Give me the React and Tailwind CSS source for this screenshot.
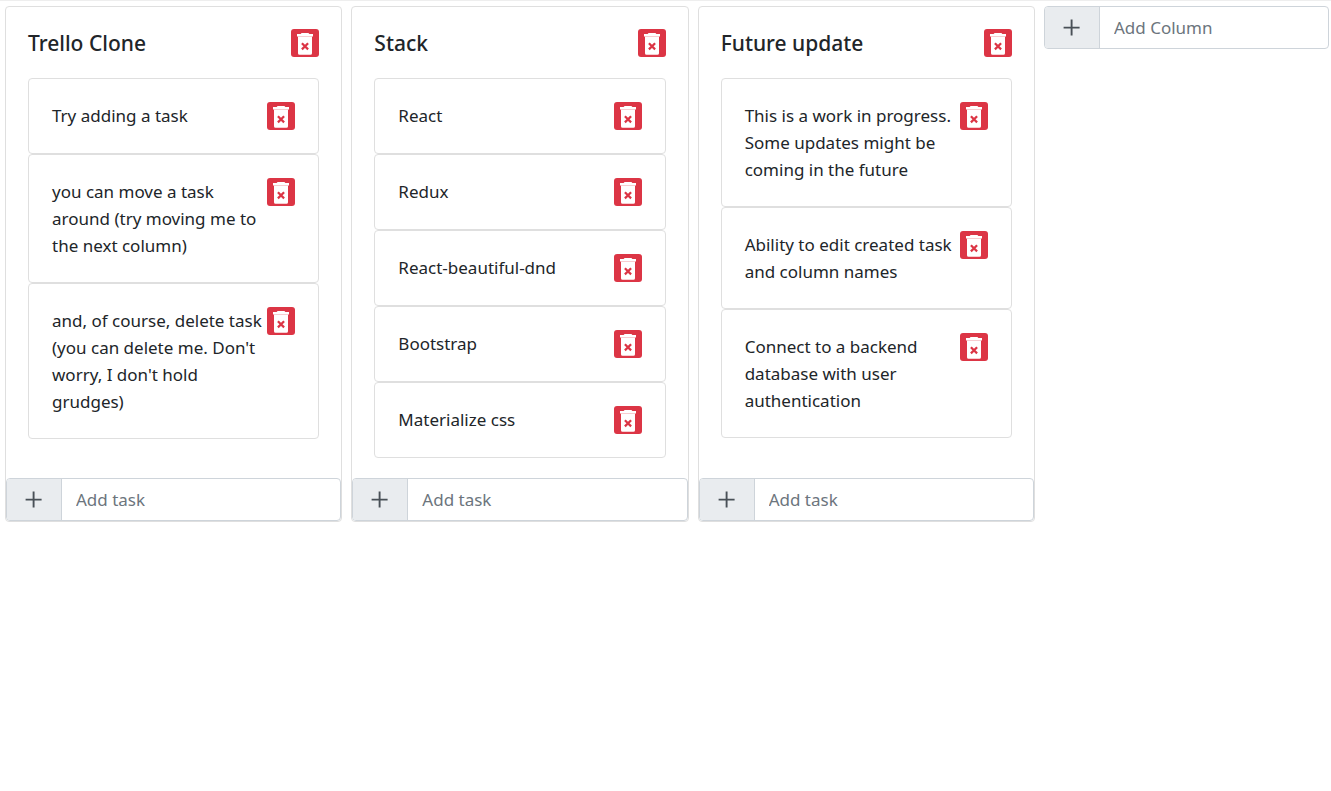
import { useState } from "react";

const initialColumns = [
  {
    title: "Trello Clone",
    tasks: [
      "Try adding a task",
      "you can move a task around (try moving me to the next column)",
      "and, of course, delete task (you can delete me. Don't worry, I don't hold grudges)",
    ],
  },
  {
    title: "Stack",
    tasks: ["React", "Redux", "React-beautiful-dnd", "Bootstrap", "Materialize css"],
  },
  {
    title: "Future update",
    tasks: [
      "This is a work in progress. Some updates might be coming in the future",
      "Ability to edit created task and column names",
      "Connect to a backend database with user authentication",
    ],
  },
];

function TrashIcon() {
  return (
    <svg viewBox="0 0 28 28" className="size-7" aria-hidden="true">
      <path
        fill="currentColor"
        d="M9.6 5L10.6 4H17.4L18.4 5H22V7.5H6V5ZM7 7.7H21V24.2Q21 25.8 19.4 25.8H8.6Q7 25.8 7 24.2Z"
      />
      <path d="M10.9 14.2L17.1 20.4M17.1 14.2L10.9 20.4" stroke="#dc3545" strokeWidth="2.2" fill="none" />
    </svg>
  );
}

function PlusIcon() {
  return (
    <svg viewBox="0 0 28 28" className="size-7" fill="none" stroke="currentColor" strokeWidth="1.9" aria-hidden="true">
      <path d="M5.6 13.6H21.6M13.6 5.6V21.6" />
    </svg>
  );
}

function DeleteButton({ label, onClick }) {
  return (
    <button
      type="button"
      aria-label={label}
      onClick={onClick}
      className="flex size-7 shrink-0 items-center justify-center rounded-[3px] bg-[#dc3545] text-white"
    >
      <TrashIcon />
    </button>
  );
}

function AddField({ label, onAdd }) {
  const [value, setValue] = useState("");
  const submit = (event) => {
    event.preventDefault();
    if (!value.trim()) return;
    onAdd(value.trim());
    setValue("");
  };
  return (
    <form onSubmit={submit} className="flex h-[43px] overflow-hidden rounded border border-[#ced4da] bg-white">
      <button
        type="submit"
        aria-label={label}
        className="flex w-[55px] shrink-0 items-center justify-center border-r border-[#ced4da] bg-[#e9ecef] text-[#495057]"
      >
        <PlusIcon />
      </button>
      <input
        type="text"
        aria-label={label}
        placeholder={label}
        value={value}
        onChange={(event) => setValue(event.target.value)}
        className="min-w-0 flex-1 px-3.5 text-[17px] text-[#495057] outline-none placeholder:text-[#6c757d]"
      />
    </form>
  );
}

function Column({ column, onChange, onDelete }) {
  return (
    <section className="flex min-w-0 flex-1 flex-col rounded border border-[#dfdfdf]">
      <div className="flex grow flex-col gap-[21px] px-[22px] pt-[22px] pb-5">
        <header className="flex items-center justify-between">
          <h2 className="text-[21px] leading-7 font-medium">{column.title}</h2>
          <DeleteButton label={`Delete ${column.title}`} onClick={onDelete} />
        </header>
        <ul>
          {column.tasks.map((task, index) => (
            <li
              key={task}
              className="flex items-start justify-between rounded border border-[#dfdfdf] p-[23px]"
            >
              <p className="text-[17px] leading-[27px]">{task}</p>
              <DeleteButton
                label={`Delete ${task}`}
                onClick={() =>
                  onChange({ ...column, tasks: column.tasks.filter((_, i) => i !== index) })
                }
              />
            </li>
          ))}
        </ul>
      </div>
      <AddField
        label="Add task"
        onAdd={(task) => onChange({ ...column, tasks: [...column.tasks, task] })}
      />
    </section>
  );
}

export default function App() {
  const [columns, setColumns] = useState(initialColumns);
  return (
    <main className="min-h-screen border-t border-[#eeeeee] bg-white pt-[5px] pr-0.5 pl-[5px] font-['Noto_Sans',sans-serif] text-[#212529]">
      <div className="flex gap-[9px]">
        {columns.map((column, index) => (
          <Column
            key={column.title}
            column={column}
            onChange={(next) => setColumns(columns.map((c, i) => (i === index ? next : c)))}
            onDelete={() => setColumns(columns.filter((_, i) => i !== index))}
          />
        ))}
        <div className="w-[285px] shrink-0">
          <AddField
            label="Add Column"
            onAdd={(title) => setColumns([...columns, { title, tasks: [] }])}
          />
        </div>
      </div>
    </main>
  );
}
